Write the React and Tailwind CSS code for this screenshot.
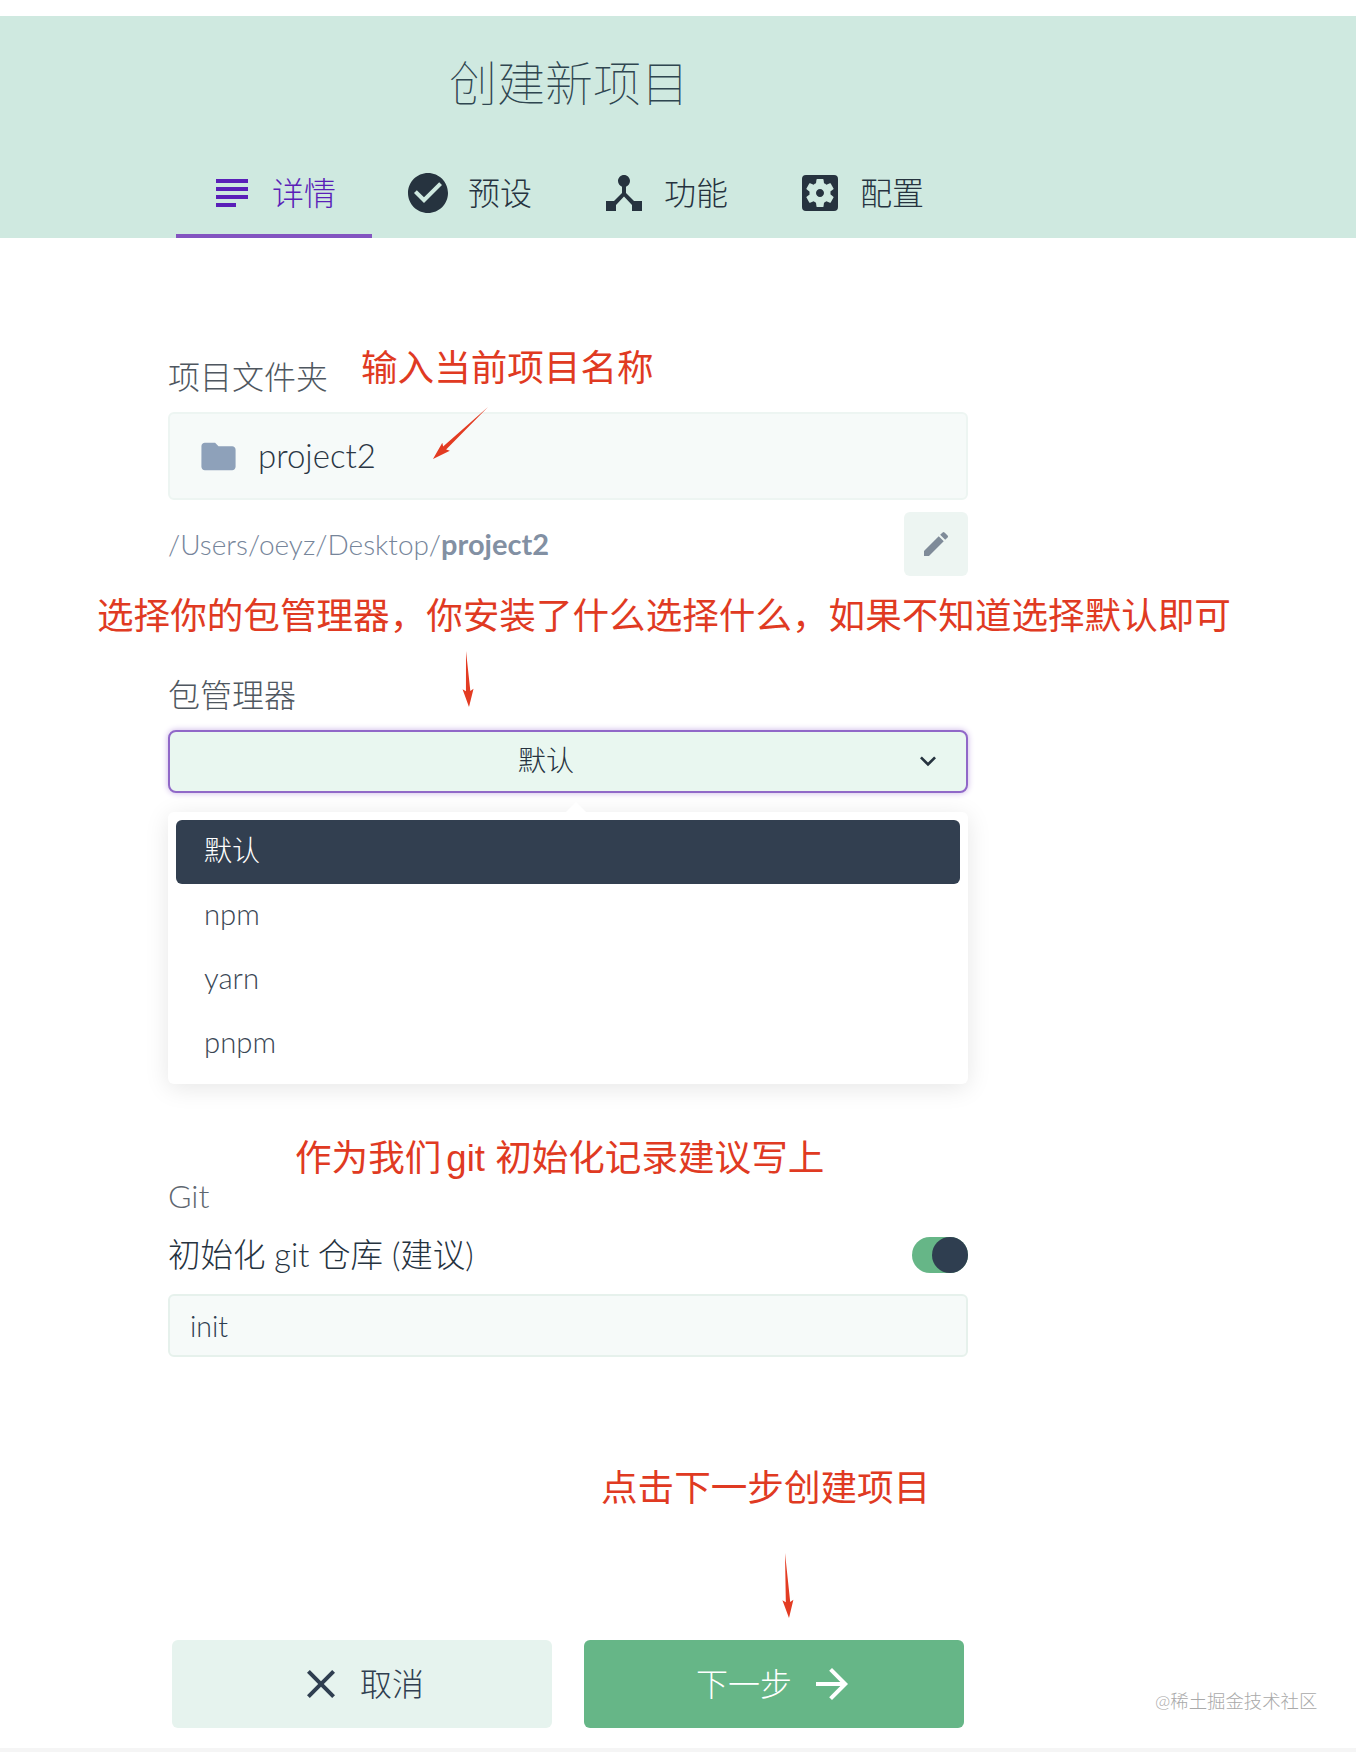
import {
  MdSubject,
  MdCheckCircle,
  MdDeviceHub,
  MdSettingsApplications,
  MdFolder,
  MdEdit,
  MdKeyboardArrowDown,
  MdClose,
  MdArrowForward,
} from "react-icons/md";

const tabs = [
  { label: "详情", Icon: MdSubject, active: true },
  { label: "预设", Icon: MdCheckCircle },
  { label: "功能", Icon: MdDeviceHub },
  { label: "配置", Icon: MdSettingsApplications },
];

// 红色批注文字
const notes = [
  { text: "输入当前项目名称", left: "left-[361px]", top: "top-[347px]" },
  { text: "选择你的包管理器，你安装了什么选择什么，如果不知道选择默认即可", left: "left-[97px]", top: "top-[595px]" },
  {
    text: (
      <>
        作为我们<span className="ml-[5px]">git</span> 初始化记录建议写上
      </>
    ),
    left: "left-[295px]",
    top: "top-[1137px]",
  },
  { text: "点击下一步创建项目", left: "left-[601px]", top: "top-[1467px]" },
];

const Arrow = ({ x1, y1, x2, y2 }) => {
  const dx = x2 - x1;
  const dy = y2 - y1;
  const len = Math.hypot(dx, dy);
  const ux = dx / len;
  const uy = dy / len;
  const px = -uy;
  const py = ux;
  const bx = x2 - ux * 16;
  const by = y2 - uy * 16;
  const pts = [
    [x1, y1],
    [bx + px * 2.2, by + py * 2.2],
    [bx + px * 5.5 - ux * 2, by + py * 5.5 - uy * 2],
    [x2, y2],
    [bx - px * 5.5 - ux * 2, by - py * 5.5 - uy * 2],
    [bx - px * 2.2, by - py * 2.2],
  ];
  return <polygon points={pts.map((p) => p.join(",")).join(" ")} fill="#e33b22" />;
};

const App = () => {
  return (
    <div className="relative h-[1752px] w-[1356px] overflow-hidden bg-white font-['Lato','Noto_Sans_CJK_SC',sans-serif] font-light text-[#2f3e50]">
      <div className="h-4" />
      <header className="flex h-[222px] flex-col bg-[#cfe9e0]">
        <h1 className="ml-[449px] mt-[31px] h-[72px] text-[48px] font-thin leading-[72px] text-[#2f4650]">创建新项目</h1>
        <nav className="ml-[176px] mt-auto flex">
          {tabs.map(({ label, Icon, active }) => (
            <div
              key={label}
              className={`flex h-[86px] w-[196px] items-center gap-4 border-b-4 pl-8 ${active ? "border-[#8354c0] text-[#5a1fb8]" : "border-transparent text-[#26333f]"}`}
            >
              <Icon size={48} className="shrink-0" />
              <span className="text-[32px] leading-none">{label}</span>
            </div>
          ))}
        </nav>
      </header>

      <main className="ml-[168px] w-[800px]">
        <div className="mt-[117px] h-11 text-[32px] leading-[44px] text-[#4f5760]">项目文件夹</div>
        <div className="mt-[13px] flex h-[88px] items-center rounded-md border-2 border-[#edf5f2] bg-[#f6faf9] pl-7 text-[33px]">
          <MdFolder size={41} className="shrink-0 text-[#8ea1ba]" />
          <span className="ml-[19px] text-[#2a3644]">project2</span>
        </div>
        <div className="mt-3 flex h-16 items-center justify-between">
          <div className="text-[28px] text-[#76859a]">
            /Users/oeyz/Desktop/<b className="text-[29px] font-bold text-[#8290a3]">project2</b>
          </div>
          <button className="flex h-16 w-16 items-center justify-center rounded-md bg-[#edf5f2] text-[#7f8b99]">
            <MdEdit size={32} />
          </button>
        </div>

        <div className="mt-[97px] h-11 text-[32px] leading-[44px] text-[#4f5760]">包管理器</div>
        <div className="relative mt-[13px] flex h-[63px] items-center justify-center rounded-lg border-2 border-[#9068c8] bg-[#e9f7f0] pb-1 pr-[44px] text-[28px] text-[#26333f] shadow-[0_0_6px_#c9b2e6]">
          <span>默认</span>
          <MdKeyboardArrowDown size={32} className="absolute right-[22px] top-[13px]" />
        </div>
        <div className="relative mt-[19px] h-[272px] rounded-md bg-white p-2 text-[29.3px] shadow-[0_4px_24px_rgba(0,0,0,0.1)]">
          <div className="absolute -top-[10px] left-[398px] h-0 w-0 border-x-[10px] border-b-[10px] border-x-transparent border-b-white" />
          <div className="flex h-16 items-center rounded-md bg-[#323f50] pb-1 pl-7 text-[28px] text-white">默认</div>
          <div className="flex h-16 items-center pb-1 pl-7 text-[#3a4654]">npm</div>
          <div className="flex h-16 items-center pb-1 pl-7 text-[#3a4654]">yarn</div>
          <div className="flex h-16 items-center pb-1 pl-7 text-[#3a4654]">pnpm</div>
        </div>

        <div className="mt-[90px] h-11 text-[32px] leading-[44px] text-[#5f6770]">Git</div>
        <div className="mt-[19px] flex h-9 items-center justify-between text-[32.5px] text-[#26333f]">
          <span>初始化 git 仓库 (建议)</span>
          <div className="flex h-9 w-14 justify-end rounded-full bg-[#66b687]">
            <div className="h-9 w-9 rounded-full bg-[#2f3e50]" />
          </div>
        </div>
        <div className="mt-[21px] flex h-[63px] items-center rounded-md border-2 border-[#e6f1ec] bg-[#f6faf9] pl-5 pt-[2px] text-[28.5px] text-[#2f3e50]">init</div>

        <div className="ml-1 mt-[283px] flex gap-8">
          <button className="flex h-[88px] w-[380px] items-center justify-center gap-[15px] rounded-md bg-[#e6f3ee] pr-[3px] text-[32px] text-[#2f3e50]">
            <MdClose size={48} />
            <span>取消</span>
          </button>
          <button className="flex h-[88px] w-[380px] items-center justify-center gap-4 rounded-md bg-[#66b687] pl-1 text-[32px] text-white">
            <span>下一步</span>
            <MdArrowForward size={48} />
          </button>
        </div>
      </main>

      <div className="absolute bottom-0 left-0 h-1 w-full bg-[#f5f5f5]" />
      <div className="absolute left-[1155px] top-[1688px] text-[18.4px] text-[#a9a9a9]">@稀土掘金技术社区</div>

      {notes.map((n, i) => (
        <div key={i} className={`absolute whitespace-nowrap font-['Liberation_Sans','Noto_Sans_CJK_SC',sans-serif] text-[36.6px] font-normal leading-[44px] text-[#e03a22] ${n.left} ${n.top}`}>
          {n.text}
        </div>
      ))}
      <svg className="pointer-events-none absolute left-0 top-0" width="1356" height="1752">
        <Arrow x1={488} y1={407} x2={433} y2={459} />
        <Arrow x1={466} y1={651} x2={469} y2={707} />
        <Arrow x1={785} y1={1553} x2={789} y2={1618} />
      </svg>
    </div>
  );
};

export default App;
